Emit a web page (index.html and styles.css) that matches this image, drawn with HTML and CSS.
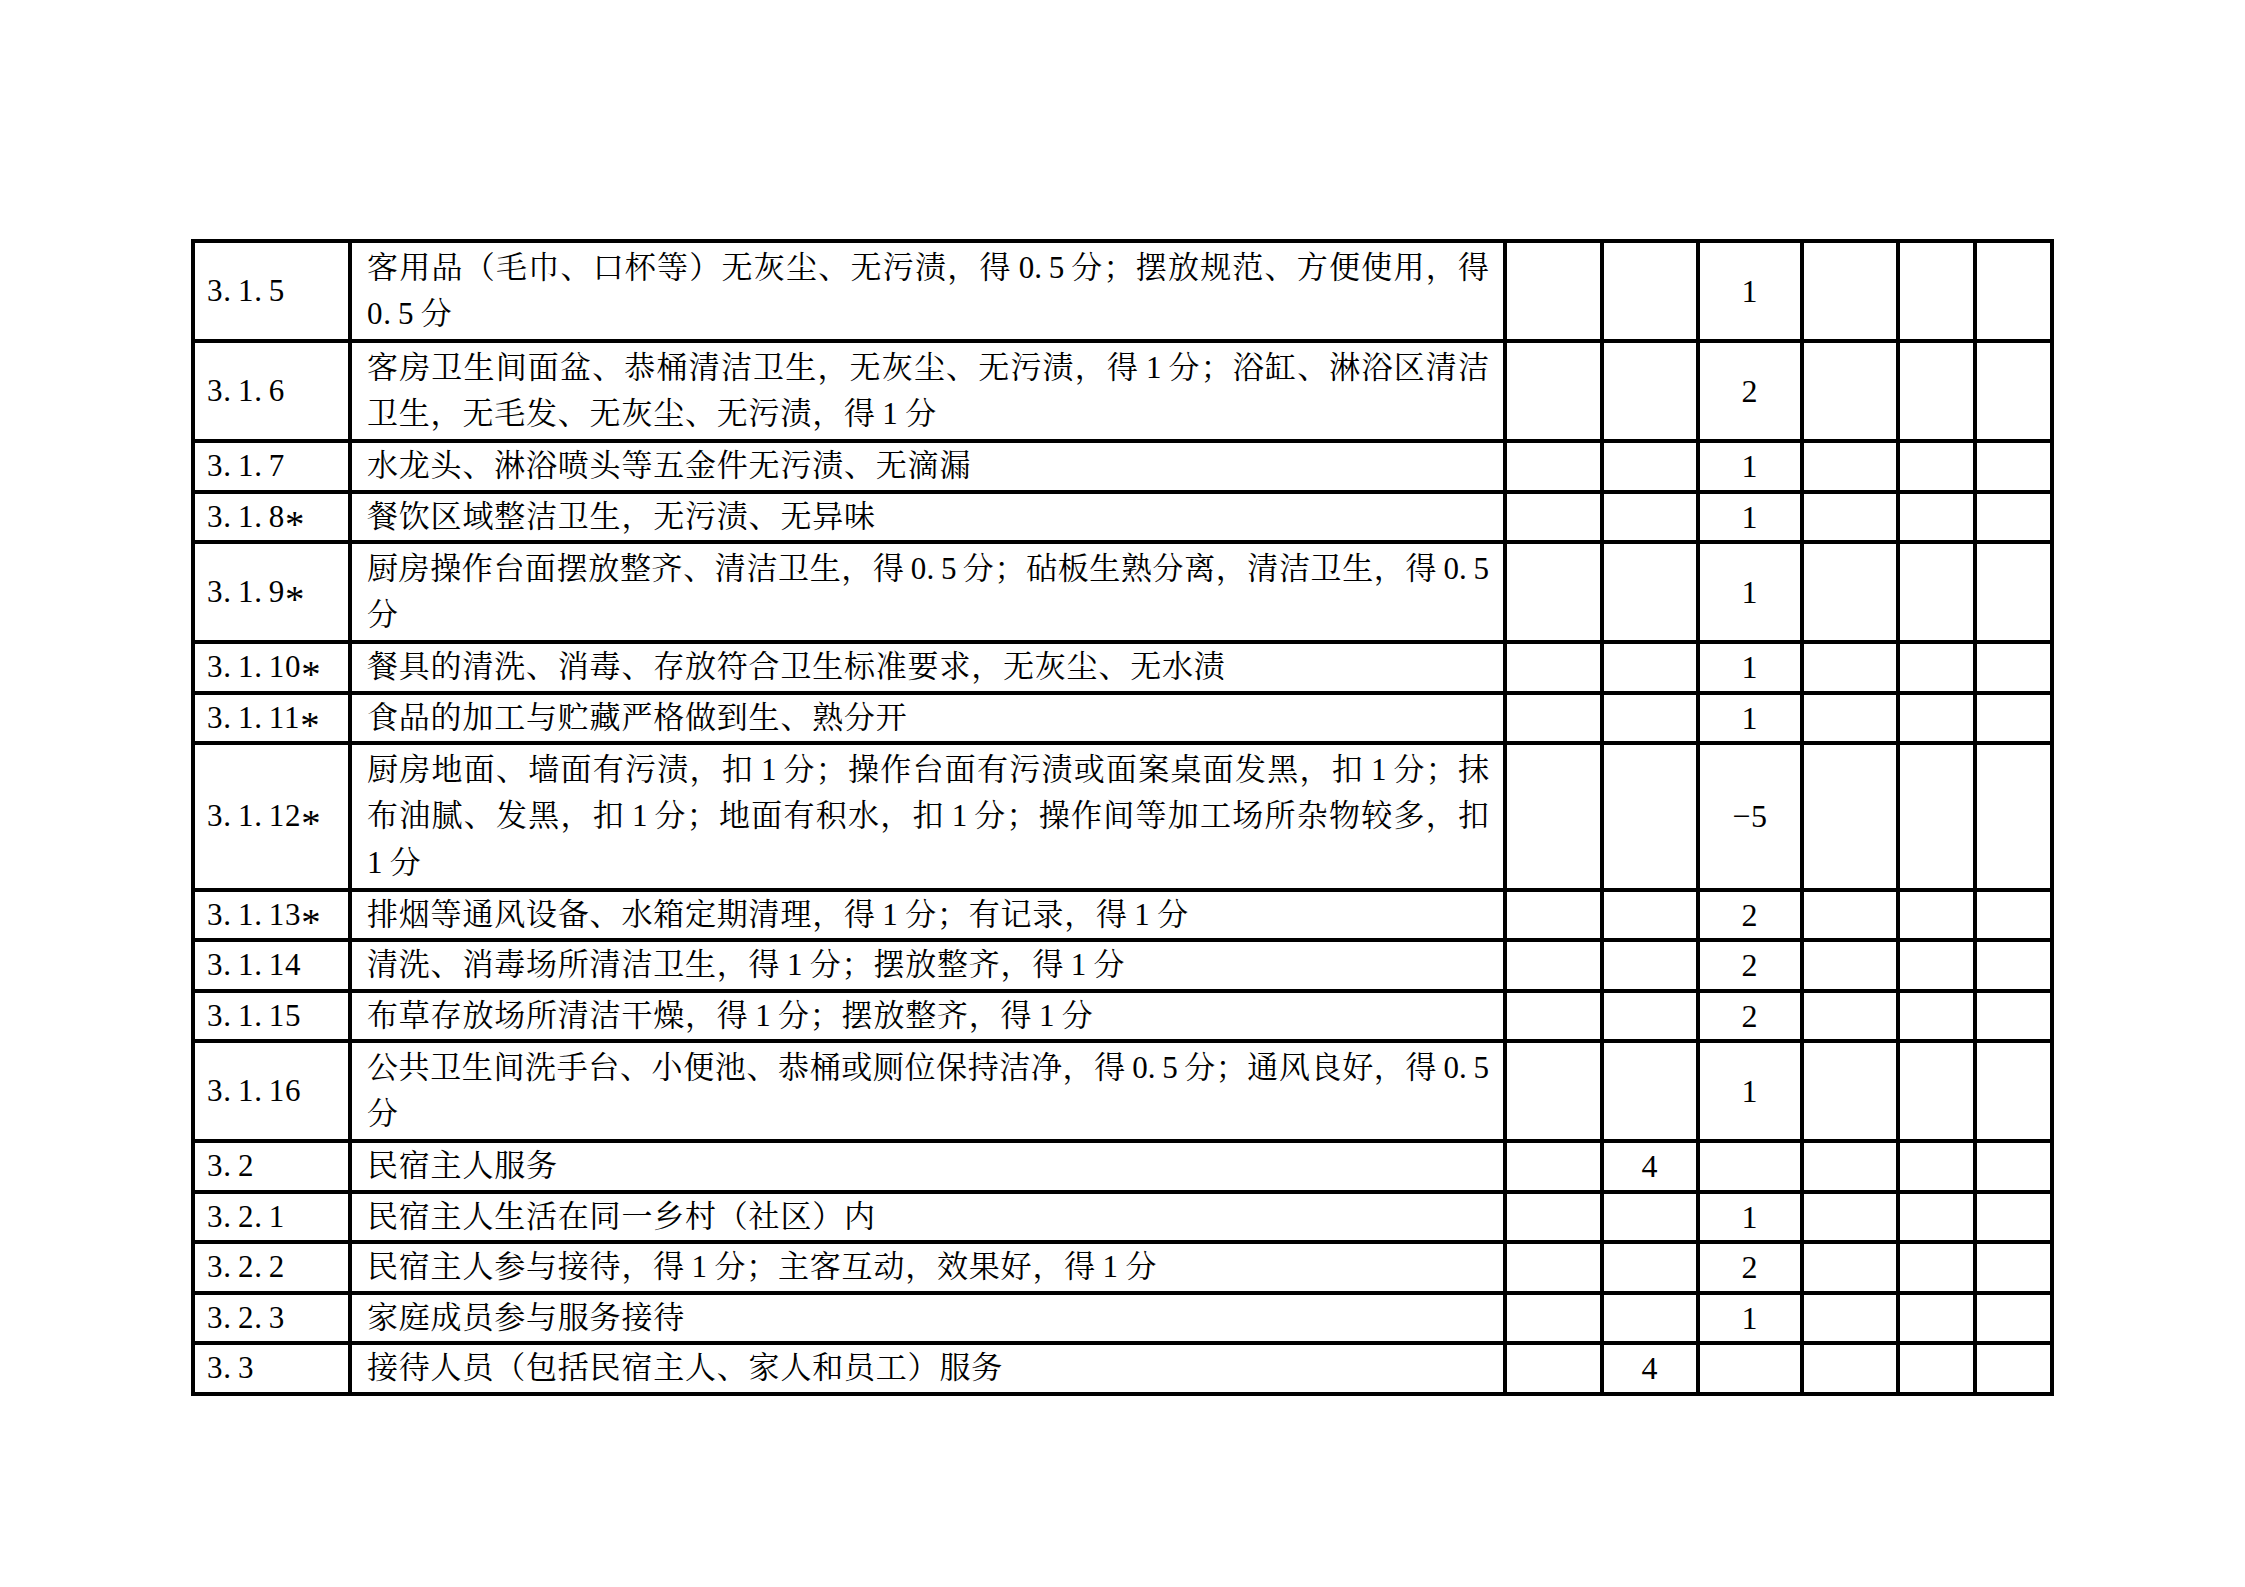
FILE: index.html
```html
<!DOCTYPE html>
<html lang="zh-CN">
<head>
<meta charset="utf-8">
<title>民宿评分表</title>
<link rel="stylesheet" href="styles.css">
</head>
<body>
<div class="page">
<table class="score">
<colgroup>
<col class="c-code"><col class="c-text"><col class="c-a"><col class="c-b"><col class="c-c"><col class="c-d"><col class="c-e"><col class="c-f">
</colgroup>
<tbody>
<tr class="m"><td class="code">3<span class="dt">.</span>1<span class="dt">.</span>5</td><td class="txt"><div class="ln j">客用品（毛巾、口杯等）无灰尘、无污渍，得 0<span class="dt">.</span>5 分；摆放规范、方便使用，得</div><div class="ln">0<span class="dt">.</span>5 分</div></td><td></td><td></td><td class="num">1</td><td></td><td></td><td></td></tr>
<tr class="m"><td class="code">3<span class="dt">.</span>1<span class="dt">.</span>6</td><td class="txt"><div class="ln j">客房卫生间面盆、恭桶清洁卫生，无灰尘、无污渍，得 1 分；浴缸、淋浴区清洁</div><div class="ln">卫生，无毛发、无灰尘、无污渍，得 1 分</div></td><td></td><td></td><td class="num">2</td><td></td><td></td><td></td></tr>
<tr><td class="code">3<span class="dt">.</span>1<span class="dt">.</span>7</td><td class="txt">水龙头、淋浴喷头等五金件无污渍、无滴漏</td><td></td><td></td><td class="num">1</td><td></td><td></td><td></td></tr>
<tr><td class="code">3<span class="dt">.</span>1<span class="dt">.</span>8<span class="ast">*</span></td><td class="txt">餐饮区域整洁卫生，无污渍、无异味</td><td></td><td></td><td class="num">1</td><td></td><td></td><td></td></tr>
<tr class="m"><td class="code">3<span class="dt">.</span>1<span class="dt">.</span>9<span class="ast">*</span></td><td class="txt"><div class="ln j">厨房操作台面摆放整齐、清洁卫生，得 0<span class="dt">.</span>5 分；砧板生熟分离，清洁卫生，得 0<span class="dt">.</span>5</div><div class="ln">分</div></td><td></td><td></td><td class="num">1</td><td></td><td></td><td></td></tr>
<tr><td class="code">3<span class="dt">.</span>1<span class="dt">.</span>10<span class="ast">*</span></td><td class="txt">餐具的清洗、消毒、存放符合卫生标准要求，无灰尘、无水渍</td><td></td><td></td><td class="num">1</td><td></td><td></td><td></td></tr>
<tr><td class="code">3<span class="dt">.</span>1<span class="dt">.</span>11<span class="ast">*</span></td><td class="txt">食品的加工与贮藏严格做到生、熟分开</td><td></td><td></td><td class="num">1</td><td></td><td></td><td></td></tr>
<tr class="m"><td class="code">3<span class="dt">.</span>1<span class="dt">.</span>12<span class="ast">*</span></td><td class="txt"><div class="ln j">厨房地面、墙面有污渍，扣 1 分；操作台面有污渍或面案桌面发黑，扣 1 分；抹</div><div class="ln j">布油腻、发黑，扣 1 分；地面有积水，扣 1 分；操作间等加工场所杂物较多，扣</div><div class="ln">1 分</div></td><td></td><td></td><td class="num">−5</td><td></td><td></td><td></td></tr>
<tr><td class="code">3<span class="dt">.</span>1<span class="dt">.</span>13<span class="ast">*</span></td><td class="txt">排烟等通风设备、水箱定期清理，得 1 分；有记录，得 1 分</td><td></td><td></td><td class="num">2</td><td></td><td></td><td></td></tr>
<tr><td class="code">3<span class="dt">.</span>1<span class="dt">.</span>14</td><td class="txt">清洗、消毒场所清洁卫生，得 1 分；摆放整齐，得 1 分</td><td></td><td></td><td class="num">2</td><td></td><td></td><td></td></tr>
<tr><td class="code">3<span class="dt">.</span>1<span class="dt">.</span>15</td><td class="txt">布草存放场所清洁干燥，得 1 分；摆放整齐，得 1 分</td><td></td><td></td><td class="num">2</td><td></td><td></td><td></td></tr>
<tr class="m"><td class="code">3<span class="dt">.</span>1<span class="dt">.</span>16</td><td class="txt"><div class="ln j">公共卫生间洗手台、小便池、恭桶或厕位保持洁净，得 0<span class="dt">.</span>5 分；通风良好，得 0<span class="dt">.</span>5</div><div class="ln">分</div></td><td></td><td></td><td class="num">1</td><td></td><td></td><td></td></tr>
<tr><td class="code">3<span class="dt">.</span>2</td><td class="txt">民宿主人服务</td><td></td><td class="num">4</td><td></td><td></td><td></td><td></td></tr>
<tr><td class="code">3<span class="dt">.</span>2<span class="dt">.</span>1</td><td class="txt">民宿主人生活在同一乡村（社区）内</td><td></td><td></td><td class="num">1</td><td></td><td></td><td></td></tr>
<tr><td class="code">3<span class="dt">.</span>2<span class="dt">.</span>2</td><td class="txt">民宿主人参与接待，得 1 分；主客互动，效果好，得 1 分</td><td></td><td></td><td class="num">2</td><td></td><td></td><td></td></tr>
<tr><td class="code">3<span class="dt">.</span>2<span class="dt">.</span>3</td><td class="txt">家庭成员参与服务接待</td><td></td><td></td><td class="num">1</td><td></td><td></td><td></td></tr>
<tr><td class="code">3<span class="dt">.</span>3</td><td class="txt">接待人员（包括民宿主人、家人和员工）服务</td><td></td><td class="num">4</td><td></td><td></td><td></td><td></td></tr>
</tbody>
</table>
</div>
</body>
</html>
```
FILE: styles.css
```css
html, body {
  margin: 0;
  background: #ffffff;
}

body {
  color: #000000;
  font-family: "Liberation Serif", "Noto Serif CJK SC", "Noto Sans CJK SC", serif;
}

.page {
  padding: 239px 0 0 191px;
}

.score {
  border-collapse: collapse;
  table-layout: fixed;
  width: 1859px;
  font-size: 31px;
  letter-spacing: 0.8px;
}

.c-code { width: 157px; }
.c-text { width: 1155px; }
.c-a { width: 97px; }
.c-b { width: 96px; }
.c-c { width: 104px; }
.c-d { width: 96px; }
.c-e { width: 77px; }
.c-f { width: 77px; }

.score td {
  border: 4px solid #000000;
  padding: 0;
  line-height: 46.5px;
  vertical-align: middle;
}

.score tr.m td {
  padding-top: 1.5px;
  padding-bottom: 1.5px;
}

.score td.code {
  padding-left: 12px;
  white-space: nowrap;
}

.score td.txt {
  padding-left: 15px;
  padding-right: 14px;
  word-spacing: -2px;
}

.score td.num {
  text-align: center;
  font-size: 32px;
}

.ln {
  display: block;
}

.ln.j {
  letter-spacing: 0;
  text-align: justify;
  text-align-last: justify;
}

.dt {
  display: inline-block;
  width: 0.47em;
}

.ast {
  font-size: 1.25em;
  line-height: 0;
  vertical-align: -0.25em;
}
```
